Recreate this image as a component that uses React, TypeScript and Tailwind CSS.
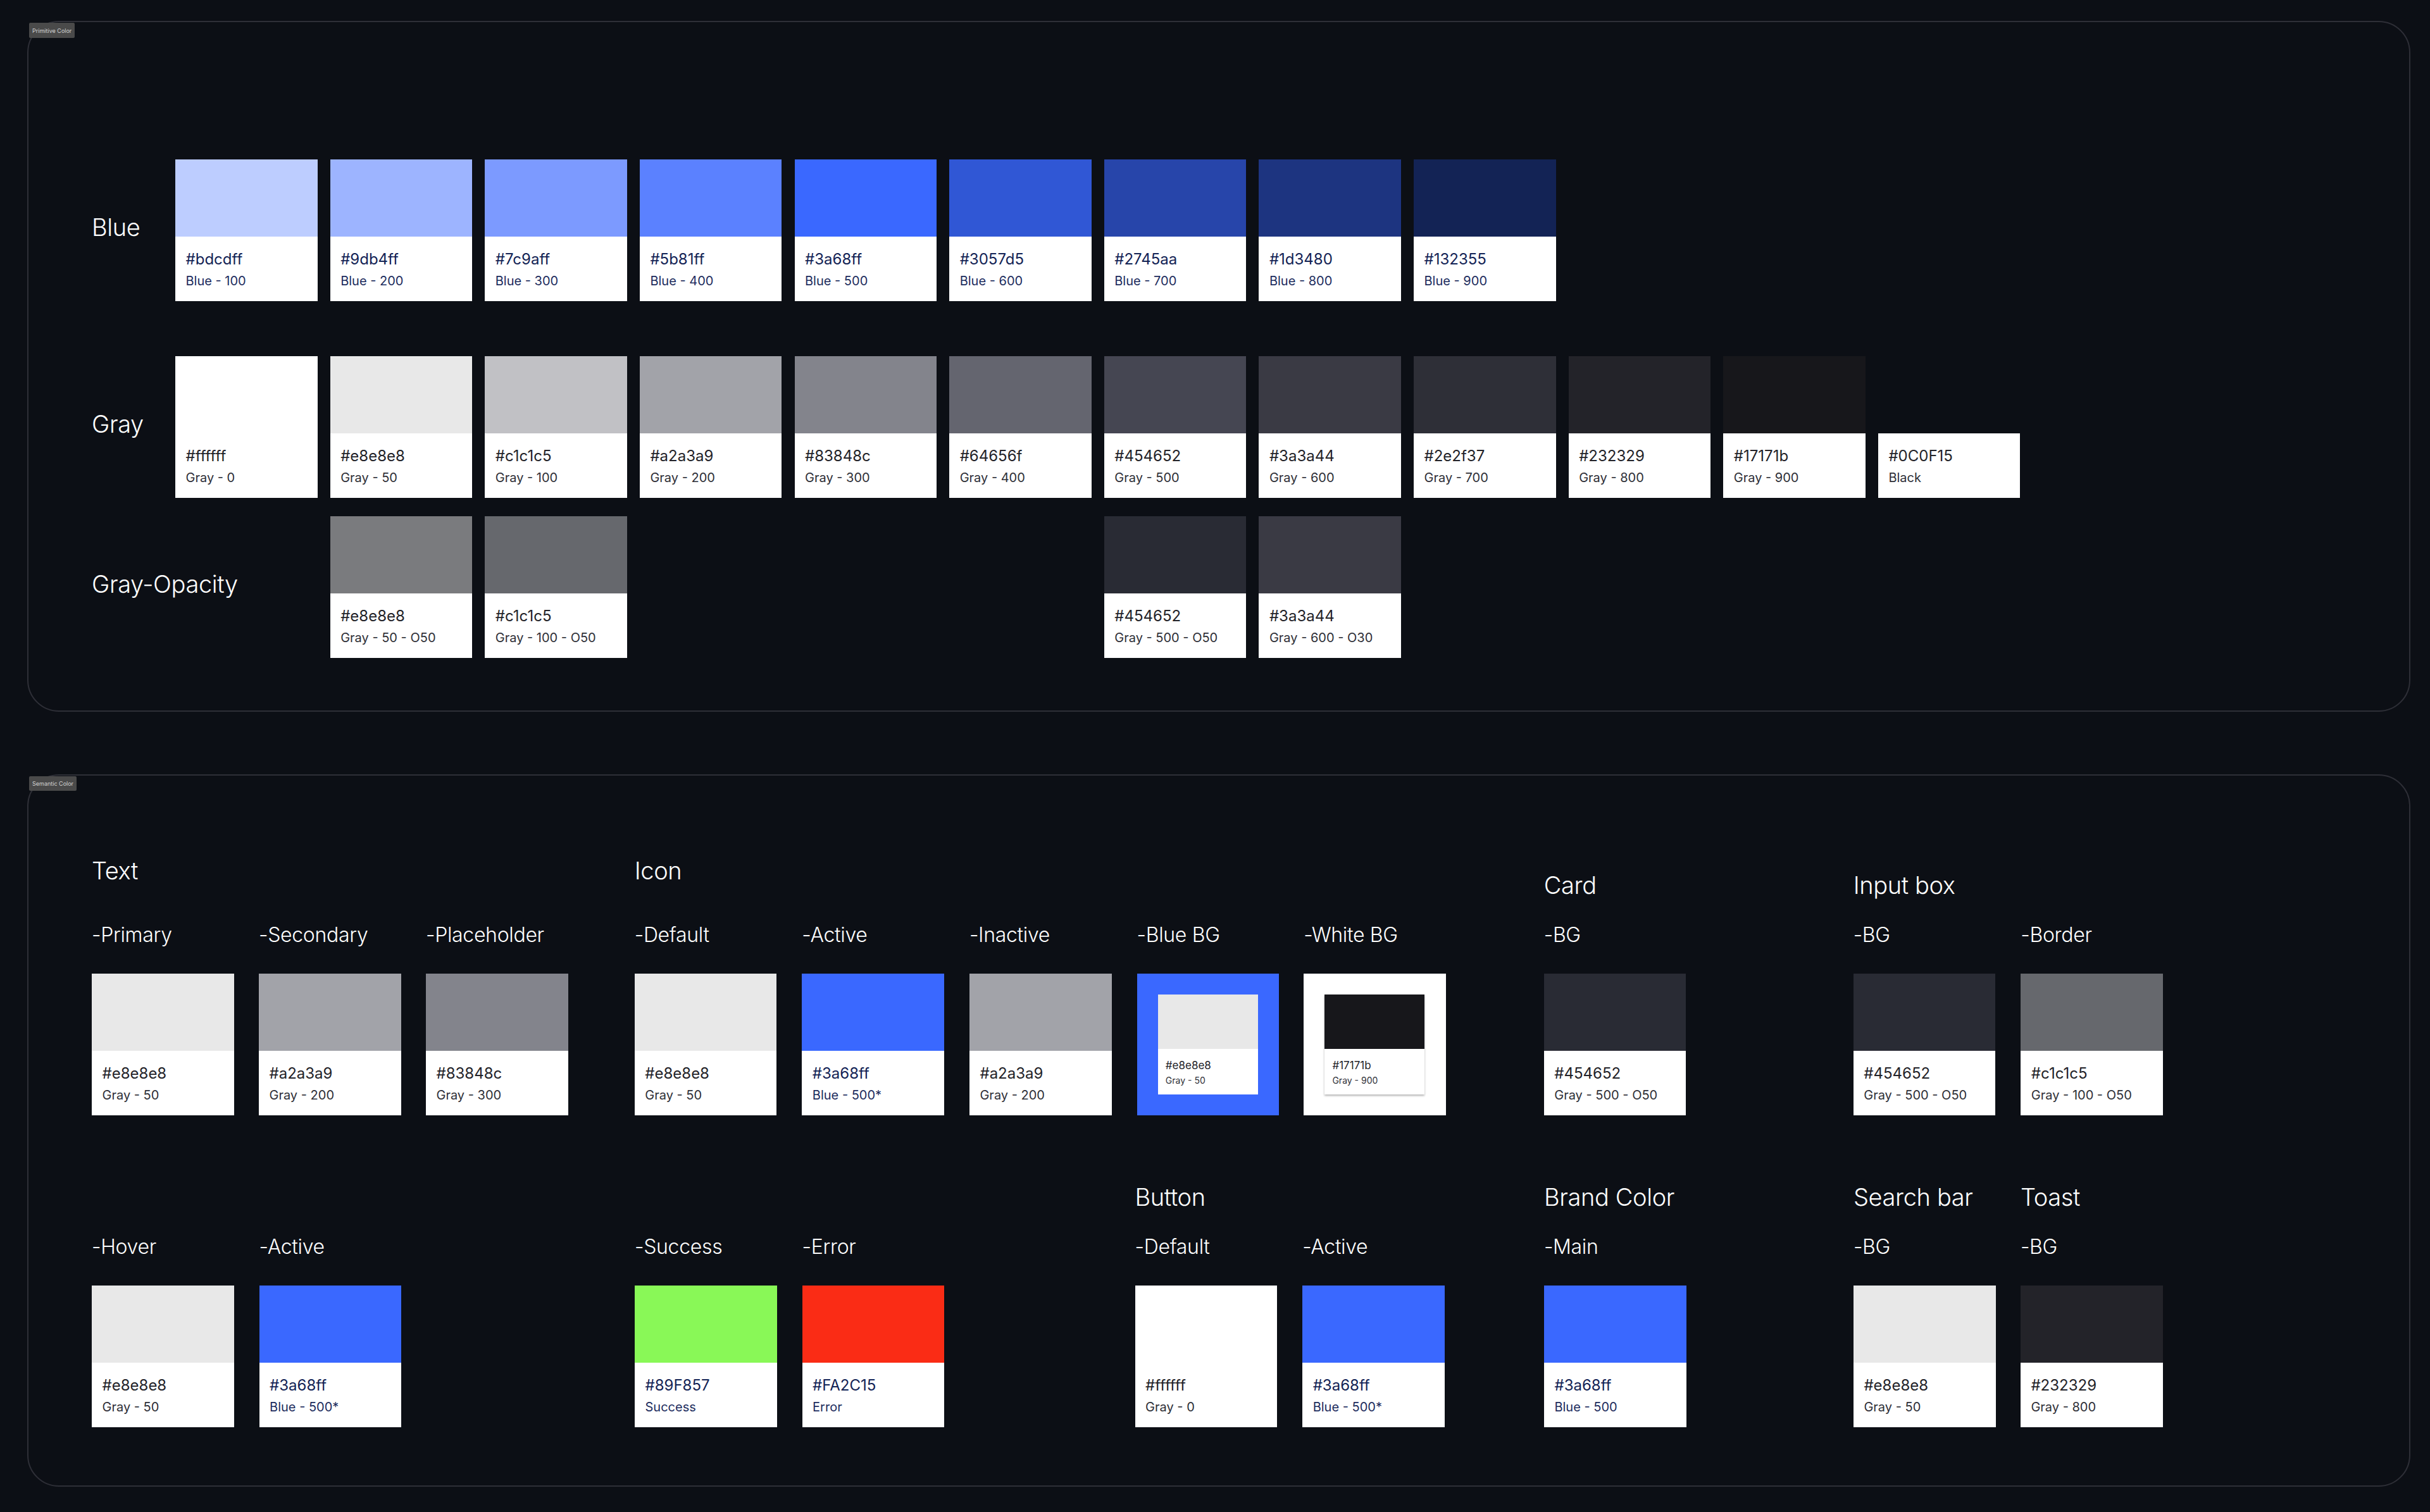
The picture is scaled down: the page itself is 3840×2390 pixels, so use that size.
const title = "text-[38px] leading-[48px] font-light text-white tracking-[-0.01em] [font-family:Inter,sans-serif]";

type CardProps = { c: string; hex: string; sub: string; hexC?: string; subC?: string };

function Card({ c, hex, sub, hexC = "text-[#232329]", subC = "text-[#2e2f37]" }: CardProps) {
  return (
    <div className="w-[224.6px] h-[224px] flex flex-col bg-white shrink-0 [font-family:Inter,sans-serif]">
      <div className="h-[122px] shrink-0" style={{ backgroundColor: c }} />
      <div className="pt-[21px] pl-[16.5px]">
        <div className={`text-[24px] leading-[30px] ${hexC}`}>{hex}</div>
        <div className={`text-[20px] leading-[26px] mt-[6px] ${subC}`}>{sub}</div>
      </div>
    </div>
  );
}

const navy = { hexC: "text-[#132355]", subC: "text-[#1d2d5e]" };

function Tag({ text, h }: { text: string; h: string }) {
  return (
    <div className={`absolute left-[1px] top-[1px] ${h} px-[5px] flex items-center rounded-[2px] bg-[#4a4a4a] text-[#d4d4d4] text-[9px] leading-none [font-family:Inter,sans-serif]`}>
      {text}
    </div>
  );
}

function Row({ label, children, className }: { label: string; children: React.ReactNode; className: string }) {
  return (
    <div className={`flex ${className}`}>
      <div className={`${title} w-[132px] shrink-0 flex items-center whitespace-nowrap pb-[10px]`}>{label}</div>
      <div className="grid grid-cols-[repeat(12,224.64px)] gap-x-[20px]">{children}</div>
    </div>
  );
}

const blues: [string, string][] = [
  ["#bdcdff", "100"], ["#9db4ff", "200"], ["#7c9aff", "300"], ["#5b81ff", "400"], ["#3a68ff", "500"],
  ["#3057d5", "600"], ["#2745aa", "700"], ["#1d3480", "800"], ["#132355", "900"],
];

const grays: [string, string, string][] = [
  ["#ffffff", "#ffffff", "Gray - 0"], ["#e8e8e8", "#e8e8e8", "Gray - 50"], ["#c1c1c5", "#c1c1c5", "Gray - 100"],
  ["#a2a3a9", "#a2a3a9", "Gray - 200"], ["#83848c", "#83848c", "Gray - 300"], ["#64656f", "#64656f", "Gray - 400"],
  ["#454652", "#454652", "Gray - 500"], ["#3a3a44", "#3a3a44", "Gray - 600"], ["#2e2f37", "#2e2f37", "Gray - 700"],
  ["#232329", "#232329", "Gray - 800"], ["#17171b", "#17171b", "Gray - 900"], ["#0C0F15", "#0C0F15", "Black"],
];

function Col({ label, children }: { label: string; children: React.ReactNode }) {
  return (
    <div className="flex flex-col shrink-0 w-[224.6px]">
      <div className="h-[40px] mb-[41px] text-[32px] leading-[40px] font-light tracking-[-0.01em] text-white whitespace-nowrap [font-family:Inter,sans-serif]">{label}</div>
      {children}
    </div>
  );
}

function Group({ name, gap = "mb-[58px]", className = "", cols = "gap-x-[40px]", children }: { name?: string; gap?: string; className?: string; cols?: string; children: React.ReactNode }) {
  return (
    <div className={`flex flex-col shrink-0 ${className}`}>
      {name && <div className={`${title} whitespace-nowrap ${gap}`}>{name}</div>}
      <div className={`flex ${cols}`}>{children}</div>
    </div>
  );
}

function Mini({ c, hex, sub, shadow }: { c: string; hex: string; sub: string; shadow?: boolean }) {
  return (
    <div className={`w-[158px] h-[158px] bg-white flex flex-col [font-family:Inter,sans-serif] ${shadow ? "shadow-[0_2px_3px_rgba(0,0,0,0.3)]" : ""}`}>
      <div className="h-[86px] shrink-0" style={{ backgroundColor: c }} />
      <div className="pt-[15px] pl-[12px]">
        <div className="text-[17px] leading-[22px] text-[#232329]">{hex}</div>
        <div className="text-[14px] leading-[18px] mt-[4px] text-[#2e2f37]">{sub}</div>
      </div>
    </div>
  );
}

export default function App() {
  return (
    <div className="w-[3840px] h-[2390px] bg-[#0C0F15] pl-[43px] pt-[33px] overflow-hidden">
      <section className="relative w-[3766px] h-[1092px] border-2 border-[#2e2f37] rounded-[50px] pl-[100px] pt-[217px]">
        <Tag text="Primitive Color" h="h-[24px]" />
        <Row label="Blue" className="h-[224px]">
          {blues.map(([c, n]) => (
            <Card key={n} c={c} hex={c} sub={`Blue - ${n}`} {...navy} />
          ))}
        </Row>
        <Row label="Gray" className="h-[224px] mt-[87px]">
          {grays.map(([c, h, s]) => (
            <Card key={s} c={c} hex={h} sub={s} />
          ))}
        </Row>
        <Row label="Gray-Opacity" className="h-[224px] mt-[29px]">
          <div className="col-start-2"><Card c="#7a7b7e" hex="#e8e8e8" sub="Gray - 50 - O50" /></div>
          <div className="col-start-3"><Card c="#66686d" hex="#c1c1c5" sub="Gray - 100 - O50" /></div>
          <div className="col-start-7"><Card c="#292b34" hex="#454652" sub="Gray - 500 - O50" /></div>
          <div className="col-start-8"><Card c="#3a3a44" hex="#3a3a44" sub="Gray - 600 - O30" /></div>
        </Row>
      </section>

      <section className="relative w-[3766px] h-[1126px] mt-[99px] border-2 border-[#2e2f37] rounded-[50px] pl-[100px] pt-[126px]">
        <Tag text="Semantic Color" h="h-[23px]" />
        <div className="flex items-end">
          <Group name="Text" cols="gap-x-[39.4px]">
            <Col label="-Primary"><Card c="#e8e8e8" hex="#e8e8e8" sub="Gray - 50" /></Col>
            <Col label="-Secondary"><Card c="#a2a3a9" hex="#a2a3a9" sub="Gray - 200" /></Col>
            <Col label="-Placeholder"><Card c="#83848c" hex="#83848c" sub="Gray - 300" /></Col>
          </Group>
          <Group name="Icon" className="ml-[105.2px]">
            <Col label="-Default"><Card c="#e8e8e8" hex="#e8e8e8" sub="Gray - 50" /></Col>
            <Col label="-Active"><Card c="#3a68ff" hex="#3a68ff" sub="Blue - 500*" {...navy} /></Col>
            <Col label="-Inactive"><Card c="#a2a3a9" hex="#a2a3a9" sub="Gray - 200" /></Col>
            <Col label="-Blue BG">
              <div className="w-[224.6px] h-[224px] bg-[#3a68ff] flex justify-center pt-[33px]">
                <Mini c="#e8e8e8" hex="#e8e8e8" sub="Gray - 50" />
              </div>
            </Col>
            <div className="-ml-[1px]">
              <Col label="-White BG">
                <div className="w-[224.6px] h-[224px] bg-white flex justify-center pt-[33px]">
                  <Mini c="#17171b" hex="#17171b" sub="Gray - 900" shadow />
                </div>
              </Col>
            </div>
          </Group>
          <Group name="Card" gap="mb-[35px]" className="ml-[155px]">
            <Col label="-BG"><Card c="#292b34" hex="#454652" sub="Gray - 500 - O50" /></Col>
          </Group>
          <Group name="Input box" gap="mb-[35px]" className="ml-[264.4px]">
            <Col label="-BG"><Card c="#292b34" hex="#454652" sub="Gray - 500 - O50" /></Col>
            <Col label="-Border"><Card c="#66686d" hex="#c1c1c5" sub="Gray - 100 - O50" /></Col>
          </Group>
        </div>

        <div className="flex items-end mt-[105px]">
          <Group>
            <Col label="-Hover"><Card c="#e8e8e8" hex="#e8e8e8" sub="Gray - 50" /></Col>
            <Col label="-Active"><Card c="#3a68ff" hex="#3a68ff" sub="Blue - 500*" {...navy} /></Col>
          </Group>
          <Group className="ml-[368.8px]">
            <Col label="-Success"><Card c="#89F857" hex="#89F857" sub="Success" {...navy} /></Col>
            <Col label="-Error"><Card c="#FA2C15" hex="#FA2C15" sub="Error" {...navy} /></Col>
          </Group>
          <Group name="Button" gap="mb-[35px]" className="ml-[301.4px]">
            <Col label="-Default"><Card c="#ffffff" hex="#ffffff" sub="Gray - 0" /></Col>
            <Col label="-Active"><Card c="#3a68ff" hex="#3a68ff" sub="Blue - 500*" {...navy} /></Col>
          </Group>
          <Group name="Brand Color" gap="mb-[35px]" className="ml-[157.2px]">
            <Col label="-Main"><Card c="#3a68ff" hex="#3a68ff" sub="Blue - 500" {...navy} /></Col>
          </Group>
          <Group name="Search bar" gap="mb-[35px]" className="ml-[264.4px]">
            <Col label="-BG"><Card c="#e8e8e8" hex="#e8e8e8" sub="Gray - 50" /></Col>
          </Group>
          <Group name="Toast" gap="mb-[35px]" className="ml-[39.4px]">
            <Col label="-BG"><Card c="#232329" hex="#232329" sub="Gray - 800" /></Col>
          </Group>
        </div>
      </section>
    </div>
  );
}
